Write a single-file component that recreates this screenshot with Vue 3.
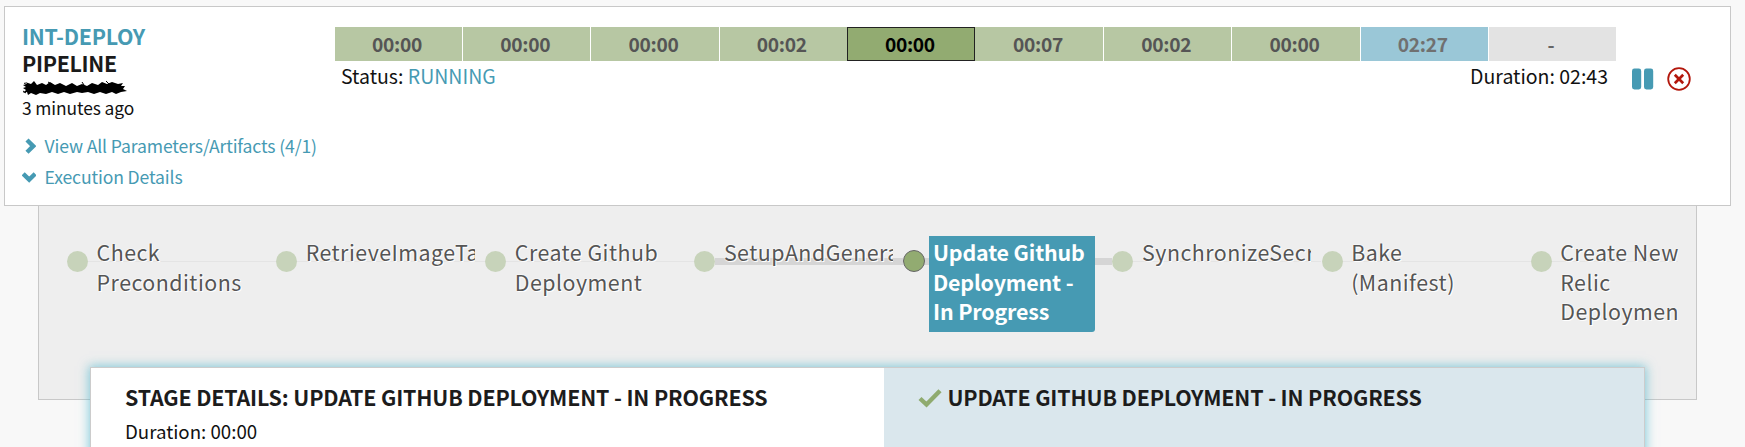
<script setup>
const segments = [
  { time: '00:00' },
  { time: '00:00' },
  { time: '00:00' },
  { time: '00:02' },
  { time: '00:00', kind: 'active' },
  { time: '00:07', kind: 'after' },
  { time: '00:02' },
  { time: '00:00' },
  { time: '02:27', kind: 'running' },
  { time: '-', kind: 'pending' },
]

const stages = [
  { name: 'Check Preconditions' },
  { name: 'RetrieveImageTag' },
  { name: 'Create Github Deployment' },
  { name: 'SetupAndGenerate', link: 'thick' },
  { name: 'Update Github Deployment - In Progress', link: 'thick', active: true },
  { name: 'SynchronizeSecrets' },
  { name: 'Bake (Manifest)' },
  { name: 'Create New Relic Deployment', last: true },
]
</script>

<template>
  <main class="page">
    <section class="card">
      <div class="summary">
        <div class="name">INT-DEPLOY</div>
        <div class="kind">PIPELINE</div>
        <svg class="redacted" width="106" height="20" viewBox="0 0 106 20">
          <path d="M1 9 L5 8 L3 6 L9 8 L12 5 L15 9 L20 7 L24 9 L28 6 L33 9 L38 7 L44 10 L50 7 L55 10 L60 8 L65 10 L70 7 L76 9 L80 6 L85 8 L90 6 L96 8 L101 7 L99 10 L103 10 L101 13 L105 15 L99 16 L94 18 L90 16 L84 18 L78 16 L72 18 L66 16 L60 17 L55 16 L48 18 L42 16 L36 18 L30 16 L24 18 L18 17 L14 19 L9 17 L6 19 L5 16 L1 17 L4 14 L1 12 L4 11 Z" fill="#000" />
          <path d="M1 15 L4 17 M2 7 L7 10 M26 6 L31 9 M60 6 L62 9 M84 5 L87 8" fill="none" stroke="#000" stroke-width="1" />
        </svg>
        <div class="ago">3 minutes ago</div>
        <a class="toggle first">
          <svg width="14" height="16" viewBox="0 0 14 16"><path d="M5 2 L11.2 8.1 L5 14.2" /></svg>
          <span>View All Parameters/Artifacts (4/1)</span>
        </a>
        <a class="toggle">
          <svg width="14" height="16" viewBox="0 0 14 16"><path d="M1.2 4.8 L7.2 10.6 L13.2 4.8" /></svg>
          <span>Execution Details</span>
        </a>
      </div>
      <div class="progress">
        <div class="bar">
          <div v-for="(s, i) in segments" :key="i" class="segment" :class="s.kind">{{ s.time }}</div>
        </div>
        <div class="status">
          <span>Status: <b class="running-text">RUNNING</b></span>
          <span>Duration: 02:43</span>
        </div>
      </div>
      <div class="controls">
        <svg width="22" height="22" viewBox="0 0 22 22">
          <rect x="0" y="0.5" width="9.2" height="21" rx="2.4" fill="#469ab3" />
          <rect x="12" y="0.5" width="9.2" height="21" rx="2.4" fill="#469ab3" />
        </svg>
        <svg width="24" height="24" viewBox="0 0 24 24">
          <circle cx="12" cy="12" r="10.8" fill="none" stroke="#b3170c" stroke-width="1.8" />
          <path d="M7.8 7.8 L16.2 16.2 M16.2 7.8 L7.8 16.2" stroke="#b3170c" stroke-width="2.7" fill="none" />
        </svg>
      </div>
    </section>

    <section class="graph">
      <div v-for="s in stages" :key="s.name" class="stage" :class="[s.link, { active: s.active, last: s.last }]">
        <i class="dot"></i>
        <div class="label">{{ s.name }}</div>
      </div>
    </section>

    <section class="details">
      <div class="pane">
        <h2>STAGE DETAILS: UPDATE GITHUB DEPLOYMENT - IN PROGRESS</h2>
        <p>Duration: 00:00</p>
      </div>
      <div class="pane step">
        <svg width="24" height="20" viewBox="0 0 24 20"><path d="M2 10.5 L8.5 16.5 L22 2.8" fill="none" stroke="#8fab6f" stroke-width="4.4" /></svg>
        <h2>UPDATE GITHUB DEPLOYMENT - IN PROGRESS</h2>
      </div>
    </section>
  </main>
</template>

<style>
body {
  background: #f8f8f8;
}
</style>

<style scoped>
.page {
  box-sizing: border-box;
  width: 1745px;
  height: 447px;
  padding: 6px 0 0 4px;
  overflow: hidden;
  background: #f8f8f8;
  font-family: "Noto Sans CJK SC", "Open Sans", sans-serif;
  color: #111;
  white-space: nowrap;
}
.card {
  box-sizing: border-box;
  display: flex;
  width: 1727px;
  height: 200px;
  padding: 16px 0 0 17px;
  background: #fff;
  border: 1px solid #c8c8c8;
  position: relative;
}
.summary {
  width: 312px;
}
.name,
.kind {
  font-size: 21.4px;
  line-height: 26px;
  font-weight: 700;
  letter-spacing: -0.25px;
  color: #469ab3;
}
.kind {
  line-height: 27px;
  color: #1a1a1a;
  letter-spacing: -0.3px;
}
.redacted {
  display: block;
}
.ago {
  font-size: 17.4px;
  line-height: 24px;
  letter-spacing: -0.1px;
}
.toggle {
  display: flex;
  align-items: center;
  gap: 8.5px;
  font-size: 17.6px;
  line-height: 31px;
  letter-spacing: -0.13px;
  color: #469ab3;
}
.toggle.first {
  margin-top: 10px;
}
.toggle path {
  fill: none;
  stroke: #469ab3;
  stroke-width: 4.4;
}
.progress {
  width: 1282px;
  padding-top: 4px;
}
.bar {
  display: grid;
  grid-template-columns: repeat(10, 1fr);
  grid-auto-rows: 34px;
  height: 34px;
}
.segment {
  box-sizing: border-box;
  border-left: 1px solid #fff;
  background: #b7c7a3;
  color: #555;
  font-size: 19.2px;
  line-height: 35px;
  font-weight: 700;
  letter-spacing: -0.3px;
  text-align: center;
  padding-right: 3px;
}
.segment.active {
  border: 1px solid #222;
  line-height: 33px;
  background: #92ab71;
  color: #000;
  padding-right: 2px;
}
.segment.after {
  border-left-color: #b7c7a3;
}
.segment.running {
  background: #9ac7d7;
  color: #707070;
}
.segment.pending {
  background: #e3e3e3;
  color: #666;
}
.status {
  display: flex;
  justify-content: space-between;
  padding: 3px 8px 0 7px;
  font-size: 19.5px;
  line-height: 24px;
}
.running-text {
  font-weight: 400;
  color: #469ab3;
}
.controls {
  display: flex;
  align-items: center;
  gap: 13px;
  height: 24px;
  margin: 44.4px 0 0 16px;
}
.graph {
  box-sizing: border-box;
  display: flex;
  width: 1659px;
  height: 195px;
  margin: -1px 0 0 34px;
  padding: 30px 0 0 28px;
  background: #eee;
  border: 1px solid #c8c8c8;
}
.stage {
  position: relative;
  display: flex;
  flex: none;
  align-items: flex-start;
  width: 209.1px;
}
.stage::before {
  content: "";
  position: absolute;
  left: 21px;
  top: 25px;
  width: 188px;
  height: 1px;
  background: #e4e4e4;
}
.stage.thick::before {
  top: 22px;
  height: 7px;
  background: #d5d5d5;
}
.stage.last::before {
  width: 126px;
}
.dot {
  position: relative;
  flex: none;
  box-sizing: border-box;
  width: 21px;
  height: 21px;
  margin-top: 15px;
  border-radius: 50%;
  background: #c7d3ba;
}
.label {
  position: relative;
  box-sizing: border-box;
  width: 173px;
  height: 96px;
  margin-left: 5px;
  padding: 1px 20px 0 3.6px;
  overflow: hidden;
  font-size: 21.4px;
  line-height: 29.5px;
  letter-spacing: 0.47px;
  color: #555;
  white-space: normal;
  text-shadow: 0 0 2px #fff, 0 0 2px #fff, 1px 1px 0 #fff;
}
.last .label {
  width: 130px;
  padding-right: 0;
  clip-path: inset(0 8px 0 0);
}
.active .dot {
  width: 22px;
  height: 22px;
  margin: 14px -0.5px 0;
  border: 1.5px solid #666;
  background: #92ab71;
}
.active .label {
  width: 166px;
  padding-right: 4px;
  border-radius: 0 0 3px 0;
  background: #469ab3;
  color: #fff;
  font-weight: 700;
  letter-spacing: -0.15px;
  text-shadow: none;
}
.details {
  position: relative;
  box-sizing: border-box;
  display: flex;
  width: 1555px;
  height: 120px;
  margin: -33px 0 0 86px;
  border: 1px solid #ccc;
  background: #fff;
  box-shadow: 0 0 10px 1px rgba(70, 180, 205, 0.65);
}
.pane {
  box-sizing: border-box;
  width: 793px;
  padding: 16px 0 0 34px;
}
.step {
  display: flex;
  align-items: flex-start;
  gap: 5.5px;
  flex: 1;
  background: #dae7ed;
}
.step svg {
  margin-top: 4px;
}
h2 {
  margin: 0;
  font-size: 21.4px;
  line-height: 26px;
  font-weight: 700;
  color: #1c1c1c;
  letter-spacing: -0.15px;
}
p {
  margin: 9px 0 0;
  font-size: 18.7px;
  line-height: 24px;
}
</style>
